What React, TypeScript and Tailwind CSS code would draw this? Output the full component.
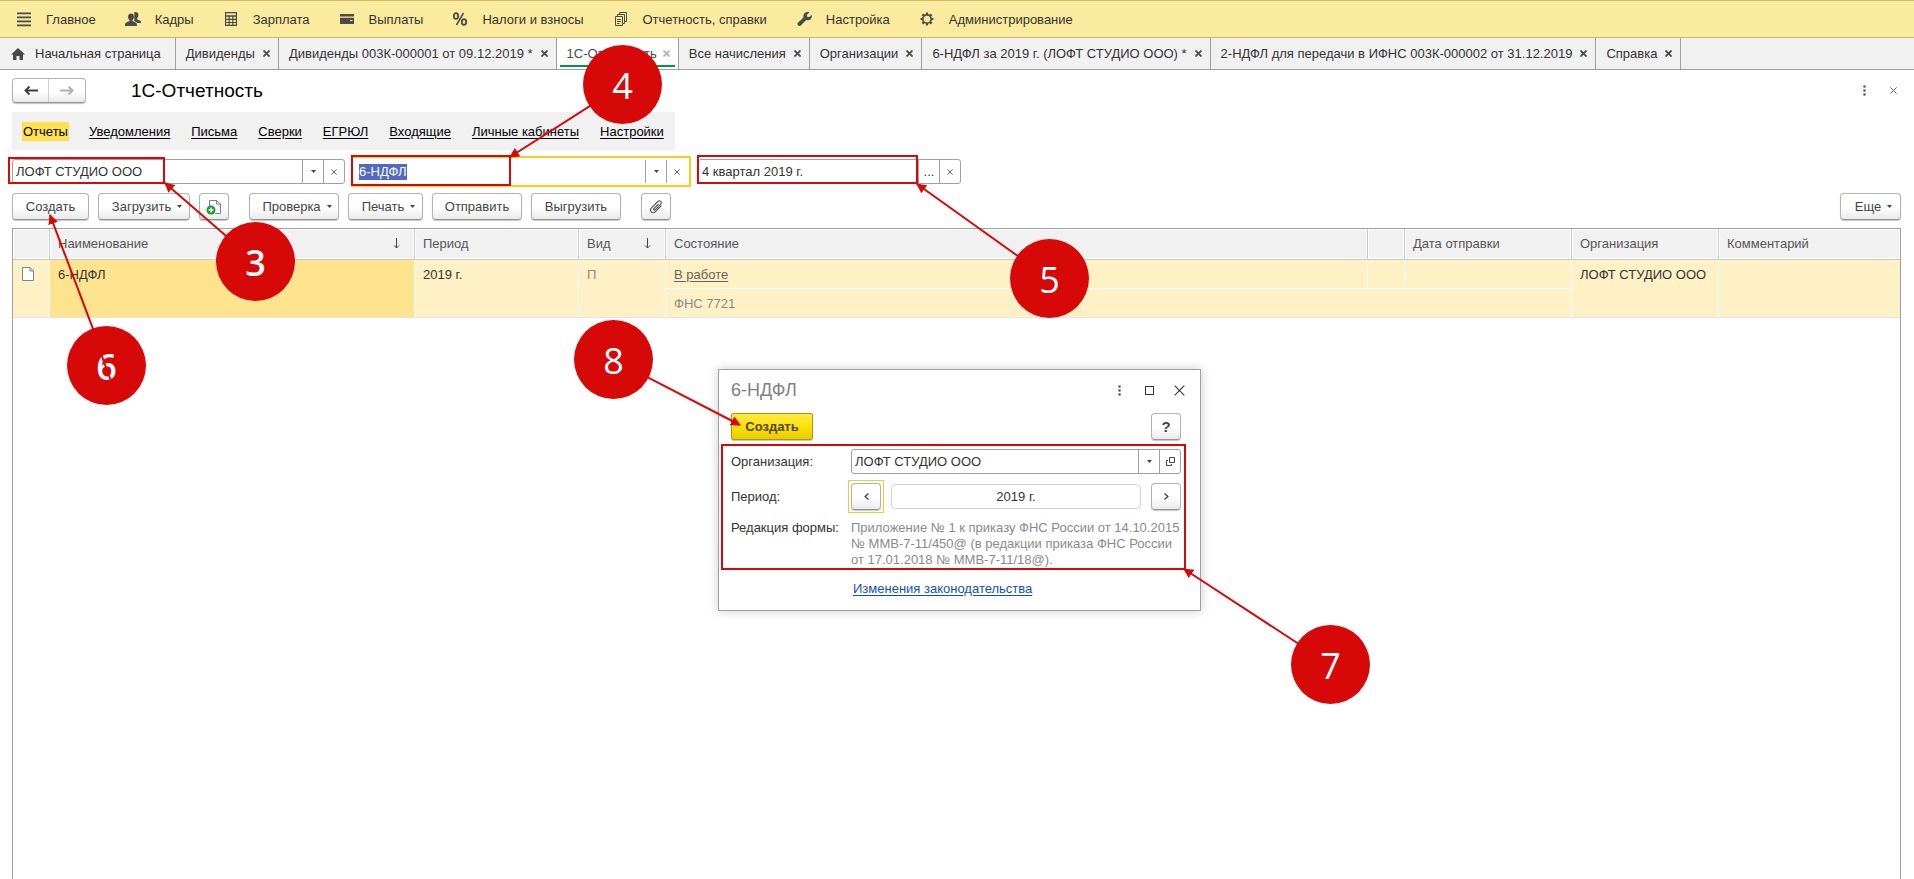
import type { ReactNode } from 'react';

interface MenuEntry {
  label: string;
  icon: ReactNode;
}

interface TabEntry {
  title: string;
  active?: boolean;
}

interface Arrow {
  from: [number, number];
  to: [number, number];
}

const MENU: MenuEntry[] = [
  {
    label: 'Главное',
    icon: <path d="M1 1.500h14v1.700H1zM1 5.500h14v1.700H1zM1 9.500h14v1.700H1zM1 13.500h14v1.700H1z" />,
  },
  {
    label: 'Кадры',
    icon: (
      <>
        <path d="M10.500 1c1.900 0 2.900 1.200 2.900 3 0 1.500-.6 2.500-1.200 3.100v1.300l2.600 1.100c.8.400 1.200 1 1.200 2.500h-3.200L9.300 10V1.300z" />
        <path d="M6 2.500c2 0 3 1.300 3 3.200 0 1.600-.7 2.700-1.500 3.300v1l3.200 1.400c.9.400 1.300 1.200 1.300 3.600H0c0-2.400.4-3.200 1.300-3.600L4.500 10V9C3.700 8.400 3 7.300 3 5.700c0-1.900 1-3.200 3-3.200z" />
      </>
    ),
  },
  {
    label: 'Зарплата',
    icon: (
      <path
        fillRule="evenodd"
        d="M2 1h12v14H2zM3.200 2.200v2h9.600v-2zM3.200 5.800v2h2.400v-2zM6.800 5.800v2h2.400v-2zM10.400 5.800v2h2.400v-2zM3.200 9v2h2.400V9zM6.800 9v2h2.400V9zM10.400 9v2h2.400V9zM3.200 12.100v1.700h2.400v-1.700zM6.800 12.100v1.700h2.400v-1.700zM10.400 12.100v1.700h2.400v-1.700z"
      />
    ),
  },
  {
    label: 'Выплаты',
    icon: <path fillRule="evenodd" d="M1 3h14v2.500H1zM1 6.800h14V13H1zM11 9v1h2.500V9z" />,
  },
  {
    label: 'Налоги и взносы',
    icon: (
      <g fill="none" stroke="currentColor" strokeWidth="1.800">
        <ellipse cx="4" cy="5" rx="2.200" ry="2.800" />
        <ellipse cx="12" cy="11" rx="2.200" ry="2.800" />
        <path d="M11.500 2 4.500 14" strokeWidth="1.500" />
      </g>
    ),
  },
  {
    label: 'Отчетность, справки',
    icon: (
      <g fill="none" stroke="currentColor" strokeWidth="1">
        <path d="M2.500 5.500h7v9h-7zM4.500 5V3.500h7v9H10M6.500 3V1.500h7v9H12M4 8.500h4M4 10.500h4M4 12.500h2.500" />
      </g>
    ),
  },
  {
    label: 'Настройка',
    icon: (
      <path d="M11.500 1c.7 0 1.300.1 1.800.4L10.800 4l.4 1.800L13 6.200l2.600-2.500c.9 2.800-.8 5.600-3.800 5.600-.6 0-1.100-.1-1.600-.3l-5.400 5.400c-1.900 1.600-4.300-.6-2.900-2.700L7.500 6.500C6.700 3.600 8.800 1 11.500 1z" />
    ),
  },
  {
    label: 'Администрирование',
    icon: (
      <g fill="none" stroke="currentColor">
        <circle cx="8" cy="8" r="4.200" strokeWidth="1.700" />
        <path
          strokeWidth="2.200"
          d="M8 1.500v2M8 12.500v2M1.500 8h2M12.500 8h2M3.400 3.400l1.400 1.400M11.200 11.200l1.400 1.400M12.600 3.400l-1.400 1.400M4.800 11.200l-1.400 1.400"
        />
      </g>
    ),
  },
];

const TABS: TabEntry[] = [
  { title: 'Дивиденды' },
  { title: 'Дивиденды 003К-000001 от 09.12.2019 *' },
  { title: '1С-Отчетность', active: true },
  { title: 'Все начисления' },
  { title: 'Организации' },
  { title: '6-НДФЛ за 2019 г. (ЛОФТ СТУДИО ООО) *' },
  { title: '2-НДФЛ для передачи в ИФНС 003К-000002 от 31.12.2019' },
  { title: 'Справка' },
];

const SECTIONS = [
  'Отчеты',
  'Уведомления',
  'Письма',
  'Сверки',
  'ЕГРЮЛ',
  'Входящие',
  'Личные кабинеты',
  'Настройки',
];

const ARROWS: Arrow[] = [
  { from: [256, 262], to: [165, 183] },
  { from: [623, 85], to: [510, 157] },
  { from: [1050, 279], to: [917, 184] },
  { from: [107, 366], to: [50, 215] },
  { from: [1331, 665], to: [1184, 569] },
  { from: [614, 360], to: [740, 425] },
];

const BUTTON =
  'flex h-[27px] items-center justify-center rounded-sm border border-[#b3b3b3] border-b-[#949494] bg-linear-to-b from-white from-50% to-[#ebebeb] text-[#444] shadow-[0_1px_1px_#c4c4c4]';

function Caret() {
  return (
    <svg className="h-[3px] w-[5px]" viewBox="0 0 5 3" fill="#444" aria-hidden="true">
      <path d="M0 0h5L2.500 3z" />
    </svg>
  );
}

function Cross({ className, width = 1 }: { className: string; width?: number }) {
  return (
    <svg
      className={className}
      viewBox="0 0 8 8"
      fill="none"
      stroke="currentColor"
      strokeWidth={width}
      aria-hidden="true"
    >
      <path d="M.5.5l7 7M7.500.5l-7 7" />
    </svg>
  );
}

function Dots() {
  return (
    <svg className="h-[11px] w-[3px]" viewBox="0 0 3 11" fill="#5a5a5a" aria-hidden="true">
      <circle cx="1.500" cy="1.500" r="1.300" />
      <circle cx="1.500" cy="5.500" r="1.300" />
      <circle cx="1.500" cy="9.500" r="1.300" />
    </svg>
  );
}

function SortArrow() {
  return (
    <svg className="h-[11px] w-[7px]" viewBox="0 0 7 11" fill="none" stroke="#444" aria-hidden="true">
      <path d="M3.500 0v10M1 7.500l2.500 2.500L6 7.500" />
    </svg>
  );
}

function MenuBar() {
  return (
    <nav className="flex h-[38px] items-center gap-[29px] border-y border-[#cdb868] bg-[#fbeb9e] pl-4">
      {MENU.map((entry) => (
        <a key={entry.label} href="#" className="flex items-center gap-[14px] whitespace-nowrap">
          <svg className="size-4 text-[#4a4a4a]" viewBox="0 0 16 16" fill="currentColor" aria-hidden="true">
            {entry.icon}
          </svg>
          {entry.label}
        </a>
      ))}
    </nav>
  );
}

function TabBar() {
  return (
    <div className="flex h-8 border-b border-[#a0a0a0] bg-[#f1f1f1]">
      <a href="#" className="flex items-center gap-[10px] border-r border-[#a0a0a0] pr-[14px] pl-[11px] whitespace-nowrap">
        <svg className="h-3 w-[14px]" viewBox="0 0 14 12" fill="#4a4a4a" aria-hidden="true">
          <path d="M7 0l7 6.500h-2V12H8.500V8h-3v4H2V6.500H0z" />
        </svg>
        Начальная страница
      </a>
      {TABS.map((tab) => (
        <div
          key={tab.title}
          className={
            tab.active
              ? 'relative flex items-center gap-[6px] border-r border-[#a0a0a0] bg-white pr-2 pl-[10px] whitespace-nowrap text-[#4a4a4a] after:absolute after:inset-x-[3px] after:bottom-[2px] after:h-[2px] after:bg-[#009646]'
              : 'flex items-center gap-2 border-r border-[#a0a0a0] pr-2 pl-[10px] whitespace-nowrap'
          }
        >
          <a href="#">{tab.title}</a>
          <button
            type="button"
            aria-label="Закрыть"
            className={tab.active ? 'text-[#b5b5b5]' : 'text-[#4a4a4a]'}
          >
            <Cross className="size-[7px]" width={2} />
          </button>
        </div>
      ))}
    </div>
  );
}

function TitleRow() {
  return (
    <div className="mt-[7px] flex h-[26px] items-center">
      <div className="flex h-[25px] rounded-sm border border-[#b3b3b3] border-b-[#949494] bg-linear-to-b from-white from-50% to-[#ebebeb] shadow-[0_1px_1px_#c4c4c4]">
        <button type="button" aria-label="Назад" className="flex w-9 items-center justify-center border-r border-[#cfcfcf]">
          <svg className="h-[9px] w-[14px]" viewBox="0 0 14 9" fill="none" stroke="#404040" strokeWidth="2" aria-hidden="true">
            <path d="M14 4.500H2M5.500.5l-4 4 4 4" />
          </svg>
        </button>
        <button type="button" aria-label="Вперед" className="flex w-9 items-center justify-center">
          <svg className="h-[9px] w-[14px]" viewBox="0 0 14 9" fill="none" stroke="#b0b0b0" strokeWidth="2" aria-hidden="true">
            <path d="M0 4.500h12M8.500.5l4 4-4 4" />
          </svg>
        </button>
      </div>
      <h1 className="ml-[45px] text-[19px] text-black">1С-Отчетность</h1>
      <div className="ml-auto flex items-center gap-6 pr-1">
        <button type="button" aria-label="Меню">
          <Dots />
        </button>
        <button type="button" aria-label="Закрыть форму" className="text-[#4a4a4a]">
          <Cross className="size-[7px]" />
        </button>
      </div>
    </div>
  );
}

function SectionLinks() {
  return (
    <nav className="mt-[9px] flex h-[38px] w-fit items-center gap-[19px] bg-[#f1f1f1] px-[10px] text-black">
      {SECTIONS.map((section, index) => (
        <a
          key={section}
          href="#"
          className={index === 0 ? 'bg-[#ffe04f] px-px py-[2px]' : 'px-px underline underline-offset-2'}
        >
          {section}
        </a>
      ))}
    </nav>
  );
}

function Filters() {
  return (
    <div className="mt-[6px] flex h-[31px] items-center">
      <div className="flex h-[25px] w-[333px] rounded-[3px] border border-[#a0a0a0]">
        <input
          aria-label="Организация"
          defaultValue="ЛОФТ СТУДИО ООО"
          className="min-w-0 flex-1 px-[3px] outline-none"
        />
        <button type="button" aria-label="Выбрать организацию" className="flex w-[21px] items-center justify-center border-l border-[#a0a0a0]">
          <Caret />
        </button>
        <button type="button" aria-label="Очистить организацию" className="flex w-[21px] items-center justify-center border-l border-[#a0a0a0]">
          <Cross className="size-[6px]" />
        </button>
      </div>
      <div className="ml-[6px] flex h-[31px] w-[340px] border-2 border-[#ffc91f] py-[2px] pr-[2px]">
        <div className="flex min-w-0 flex-1 items-center pl-[6px]">
          <input
            aria-label="Вид отчета"
            defaultValue="6-НДФЛ"
            className="h-4 w-12 bg-[#5169c4] text-white outline-none"
          />
        </div>
        <button type="button" aria-label="Выбрать вид отчета" className="flex w-[21px] items-center justify-center border-l border-[#a0a0a0]">
          <Caret />
        </button>
        <button type="button" aria-label="Очистить вид отчета" className="flex w-[21px] items-center justify-center border-l border-[#a0a0a0]">
          <Cross className="size-[6px]" />
        </button>
      </div>
      <div className="ml-[7px] flex h-[25px] w-[263px] rounded-[3px] border border-[#a0a0a0]">
        <input
          aria-label="Период"
          defaultValue="4 квартал 2019 г."
          className="min-w-0 flex-1 px-[3px] outline-none"
        />
        <button type="button" aria-label="Выбрать период" className="w-[21px] border-l border-[#a0a0a0]">
          ...
        </button>
        <button type="button" aria-label="Очистить период" className="flex w-[21px] items-center justify-center border-l border-[#a0a0a0]">
          <Cross className="size-[6px]" />
        </button>
      </div>
    </div>
  );
}

function Toolbar() {
  return (
    <div className="mt-[6px] flex gap-[9px]">
      <button type="button" className={`${BUTTON} w-[77px]`}>
        Создать
      </button>
      <button type="button" className={`${BUTTON} w-[92px] gap-[6px] pl-[6px]`}>
        Загрузить <Caret />
      </button>
      <button type="button" aria-label="Добавить файл" className={`${BUTTON} w-[30px]`}>
        <svg className="size-4" viewBox="0 0 16 16" fill="none" aria-hidden="true">
          <path d="M3.500 7V1.500h7L14.500 5v9.500H9" fill="#fff" stroke="#6f8796" />
          <path d="M10.500 1.500V5h4" stroke="#6f8796" />
          <circle cx="5" cy="11" r="4.500" fill="#1d9a33" />
          <path d="M5 8.500v5M2.500 11h5" stroke="#fff" strokeWidth="1.400" />
        </svg>
      </button>
      <button type="button" className={`${BUTTON} ml-[11px] w-[90px] gap-[6px] pl-[6px]`}>
        Проверка <Caret />
      </button>
      <button type="button" className={`${BUTTON} w-[75px] gap-[6px] pl-[6px]`}>
        Печать <Caret />
      </button>
      <button type="button" className={`${BUTTON} w-[90px]`}>
        Отправить
      </button>
      <button type="button" className={`${BUTTON} w-[90px]`}>
        Выгрузить
      </button>
      <button type="button" aria-label="Присоединенные файлы" className={`${BUTTON} ml-[11px] w-[30px]`}>
        <svg className="size-[14px]" viewBox="0 0 14 14" fill="none" stroke="#555" strokeWidth="1.100" aria-hidden="true">
          <path d="M9.500 4 4.800 8.700c-.9.900.3 2.100 1.200 1.200l5.600-5.600c2-2-.8-4.800-2.800-2.800L2.500 7.800c-2.900 2.900 1 6.800 3.900 3.900l6-6" />
        </svg>
      </button>
      <button type="button" className={`${BUTTON} ml-auto w-[61px] gap-[6px] pl-[6px]`}>
        Еще <Caret />
      </button>
    </div>
  );
}

function ReportTable() {
  const head = 'border-r border-[#c8c8c8] px-2 pb-[2px] text-left font-normal shadow-[inset_0_0_0_1px_#fff]';
  const cell = 'border-r border-white px-2 pt-[7px] align-top';

  return (
    <div className="mt-2 flex-1 border border-b-0 border-[#a0a0a0]">
      <table className="w-full table-fixed border-separate border-spacing-0">
        <colgroup>
          <col className="w-[37px]" />
          <col className="w-[365px]" />
          <col className="w-[164px]" />
          <col className="w-[87px]" />
          <col />
          <col className="w-[37px]" />
          <col className="w-[167px]" />
          <col className="w-[147px]" />
          <col className="w-[181px]" />
        </colgroup>
        <thead>
          <tr className="h-[31px] bg-[#f1f1f1] text-[#555] *:border-b">
            <th className={head} aria-label="Значок" />
            <th className={head}>
              <div className="flex items-center justify-between pr-[6px]">
                Наименование <SortArrow />
              </div>
            </th>
            <th className={head}>Период</th>
            <th className={head}>
              <div className="flex items-center justify-between pr-[6px]">
                Вид <SortArrow />
              </div>
            </th>
            <th className={head}>Состояние</th>
            <th className={head} aria-label="Признак" />
            <th className={head}>Дата отправки</th>
            <th className={head}>Организация</th>
            <th className={`${head} border-r-0`}>Комментарий</th>
          </tr>
        </thead>
        <tbody className="bg-[#fef1c6]">
          <tr className="h-[29px]">
            <td rowSpan={2} className={cell}>
              <svg className="ml-px h-[14px] w-3" viewBox="0 0 12 14" fill="#fff" stroke="#6f8796" aria-hidden="true">
                <path d="M.5.5h7.500l3.500 3.500v9.500H.5zM8 .5V4h3.500" />
              </svg>
            </td>
            <td rowSpan={2} className={`${cell} bg-[#ffe48f]`}>
              6-НДФЛ
            </td>
            <td rowSpan={2} className={cell}>
              2019 г.
            </td>
            <td rowSpan={2} className={`${cell} text-[#8a8a8a]`}>
              П
            </td>
            <td className={`${cell} border-b`}>
              <a href="#" className="text-[#6b6459] underline underline-offset-2">
                В работе
              </a>
            </td>
            <td className={`${cell} border-b`} />
            <td className={`${cell} border-b`} />
            <td rowSpan={2} className={`${cell} whitespace-nowrap`}>
              ЛОФТ СТУДИО ООО
            </td>
            <td rowSpan={2} className={`${cell} border-r-0`} />
          </tr>
          <tr className="h-7">
            <td colSpan={3} className={`${cell} text-[#8a8a8a]`}>
              ФНС 7721
            </td>
          </tr>
        </tbody>
      </table>
      <div className="h-px bg-[#e4e4e4]" />
    </div>
  );
}

function CreateDialog() {
  return (
    <div
      role="dialog"
      aria-label="6-НДФЛ"
      className="absolute top-[369px] left-[718px] h-[242px] w-[483px] border border-[#a0a0a0] bg-white px-3 shadow-[0_0_10px_#00000033]"
    >
      <div className="flex h-[43px] items-center justify-between pb-[2px]">
        <h2 className="text-[18px] text-[#808080]">6-НДФЛ</h2>
        <div className="flex items-center gap-[20px] pr-[3px]">
          <button type="button" aria-label="Меню окна" className="pr-[4px]">
            <Dots />
          </button>
          <button type="button" aria-label="Развернуть" className="size-[9px] border border-[#333]" />
          <button type="button" aria-label="Закрыть окно" className="text-[#333]">
            <Cross className="size-[11px]" width={0.8} />
          </button>
        </div>
      </div>
      <div className="flex justify-between pr-[7px]">
        <button
          type="button"
          className="h-[27px] w-[82px] rounded-xs border border-[#ab9a0f] bg-linear-to-b from-[#ffea3d] via-[#ffe100] to-[#e8cc00] font-bold text-[#4b4620] shadow-[0_1px_1px_#c4c4c4]"
        >
          Создать
        </button>
        <button type="button" className={`${BUTTON} w-[30px] text-[15px] font-bold text-[#333]`}>
          ?
        </button>
      </div>
      <div className="mt-[9px] flex items-center pr-[7px]">
        <label htmlFor="dialog-org" className="w-[120px]">
          Организация:
        </label>
        <div className="flex h-[25px] flex-1 rounded-[3px] border border-[#a0a0a0]">
          <input id="dialog-org" defaultValue="ЛОФТ СТУДИО ООО" className="min-w-0 flex-1 px-[3px] outline-none" />
          <button type="button" aria-label="Выбрать" className="flex w-[21px] items-center justify-center border-l border-[#a0a0a0]">
            <Caret />
          </button>
          <button type="button" aria-label="Открыть" className="flex w-[21px] items-center justify-center border-l border-[#a0a0a0]">
            <svg className="size-[9px]" viewBox="0 0 9 9" fill="none" stroke="#444" aria-hidden="true">
              <path d="M3.500.5h5v5h-5zM2 3.500H.5v5h5V7" />
            </svg>
          </button>
        </div>
      </div>
      <div className="mt-[6px] flex items-center pr-[7px]">
        <label htmlFor="dialog-period" className="w-[117px]">
          Период:
        </label>
        <span className="border border-[#f5c92f] p-[2px]">
          <button type="button" aria-label="Предыдущий период" className={`${BUTTON} w-[30px]`}>
            <svg className="h-[7px] w-[5px]" viewBox="0 0 5 7" fill="none" stroke="#333" strokeWidth="1.100" aria-hidden="true">
              <path d="M4.500.5l-3.500 3 3.500 3" />
            </svg>
          </button>
        </span>
        <input
          id="dialog-period"
          readOnly
          value="2019 г."
          className="mr-[10px] ml-[7px] h-[25px] min-w-0 flex-1 rounded-sm border border-[#d2d2d2] text-center outline-none"
        />
        <button type="button" aria-label="Следующий период" className={`${BUTTON} w-[30px]`}>
          <svg className="h-[7px] w-[5px]" viewBox="0 0 5 7" fill="none" stroke="#333" strokeWidth="1.100" aria-hidden="true">
            <path d="M.5.5l3.500 3-3.500 3" />
          </svg>
        </button>
      </div>
      <div className="mt-[7px] flex leading-4">
        <span className="w-[120px]">Редакция формы:</span>
        <p className="whitespace-nowrap text-[#8a8a8a]">
          Приложение № 1 к приказу ФНС России от 14.10.2015
          <br />
          № ММВ-7-11/450@ (в редакции приказа ФНС России
          <br />
          от 17.01.2018 № ММВ-7-11/18@).
        </p>
      </div>
      <a href="#" className="mt-[13px] ml-[122px] block w-fit leading-4 text-[#1450b8] underline underline-offset-2">
        Изменения законодательства
      </a>
    </div>
  );
}

function Callouts() {
  const circle =
    'absolute flex size-[79px] items-center justify-center rounded-full bg-[#d70808] pt-[3px] font-["Open_Sans",sans-serif] text-[36px] leading-none text-white';

  return (
    <div className="pointer-events-none absolute inset-0 overflow-hidden">
      <div className="absolute top-[157px] left-[8px] h-[27px] w-[157px] border-2 border-[#d70808]" />
      <div className="absolute top-[155px] left-[351px] h-[31px] w-[160px] border-2 border-[#d70808]" />
      <div className="absolute top-[155px] left-[697px] h-[29px] w-[221px] border-2 border-[#d70808]" />
      <div className="absolute top-[444px] left-[721px] h-[126px] w-[465px] border-2 border-[#d70808]" />

      <div className={`${circle} top-[222px] left-[216px] font-semibold`}>3</div>
      <div className={`${circle} top-[45px] left-[583px]`}>4</div>
      <div className={`${circle} top-[239px] left-[1010px]`}>5</div>
      <div className={`${circle} top-[326px] left-[67px] font-semibold`}>6</div>
      <div className={`${circle} top-[625px] left-[1291px]`}>7</div>
      <div className={`${circle} top-[320px] left-[574px]`}>8</div>

      <svg className="absolute top-0 left-0 h-[879px] w-[1914px]" aria-hidden="true">
        <defs>
          <marker id="head" viewBox="0 0 10 10" refX="9" refY="5" markerWidth="10" markerHeight="10" markerUnits="userSpaceOnUse" orient="auto">
            <path d="M0 0l10 5-10 5z" fill="#d70808" />
          </marker>
        </defs>
        {ARROWS.map(({ from, to }) => {
          // start at the rim of the circle so the digit stays clear
          const length = Math.hypot(to[0] - from[0], to[1] - from[1]);
          const x = from[0] + ((to[0] - from[0]) * 38) / length;
          const y = from[1] + ((to[1] - from[1]) * 38) / length;

          return (
            <line
              key={`${to[0]}-${to[1]}`}
              x1={x}
              y1={y}
              x2={to[0]}
              y2={to[1]}
              stroke="#d70808"
              strokeWidth="2"
              markerEnd="url(#head)"
            />
          );
        })}
        <path d="M100 351l11 30" stroke="#d70808" strokeWidth="2" />
      </svg>
    </div>
  );
}

export default function App() {
  return (
    <div className='relative flex min-h-screen flex-col bg-white font-["Liberation_Sans",Arial,sans-serif] text-[13px] leading-[15px] text-[#333]'>
      <MenuBar />
      <TabBar />
      <main className="flex flex-1 flex-col pr-[13px] pl-3">
        <TitleRow />
        <SectionLinks />
        <Filters />
        <Toolbar />
        <ReportTable />
      </main>
      <CreateDialog />
      <Callouts />
    </div>
  );
}
